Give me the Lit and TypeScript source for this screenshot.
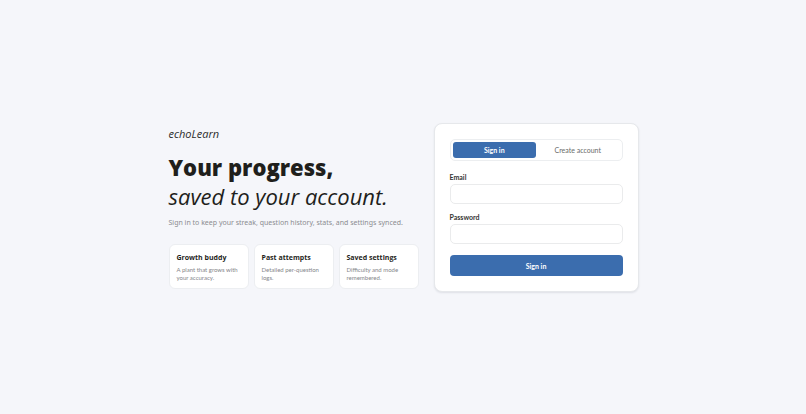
import { LitElement, html, css } from "lit";
import { customElement, state } from "lit/decorators.js";

const features = [
  { title: "Growth buddy", text: "A plant that grows with your accuracy." },
  { title: "Past attempts", text: "Detailed per-question logs." },
  { title: "Saved settings", text: "Difficulty and mode remembered." },
];

@customElement("app-root")
export class AppRoot extends LitElement {
  @state() mode = "signin";

  static styles = css`
    :host {
      display: grid;
      place-items: center;
      min-height: 100vh;
      box-sizing: border-box;
      padding: 17px 16px 16px 17px;
      background: #f5f6fa;
      color: #1f1f1c;
      font-family: "Open Sans", "Noto Sans", sans-serif;
    }
    * { box-sizing: border-box; }
    h1, h2, p { margin: 0; }
    button, input { font: inherit; }
    .layout {
      width: 100%;
      max-width: 470px;
      display: grid;
      grid-template-columns: minmax(0, 250fr) minmax(0, 205fr);
      gap: 15px;
      align-items: center;
    }
    .brand { font-size: 11px; line-height: 16px; font-style: italic; color: #2b2c2b; }
    h1 {
      margin-top: 11px;
      font-size: 22px;
      line-height: 29px;
      font-weight: 800;
      white-space: nowrap;
    }
    h1 em { display: block; font-weight: 400; }
    .lead {
      margin-top: 6px;
      font-family: "Noto Sans", sans-serif;
      font-size: 7px;
      line-height: 12px;
      color: #8b8c90;
      white-space: nowrap;
    }
    .features {
      margin-top: 15px;
      display: grid;
      grid-template-columns: repeat(3, minmax(0, 1fr));
      gap: 5px;
    }
    .feature {
      padding: 7px 7px 6px;
      background: #fff;
      border: 1px solid #eceef1;
      border-radius: 6px;
    }
    h2 { font-size: 7px; line-height: 12px; font-weight: 700; white-space: nowrap; }
    .feature p {
      margin-top: 2px;
      font-family: Lato, sans-serif;
      font-size: 6px;
      line-height: 8px;
      color: #85868a;
    }
    .card {
      padding: 15px;
      background: #fff;
      border: 1px solid #e6e8eb;
      border-radius: 8px;
      box-shadow: 0 1px 2px rgba(30, 40, 60, 0.1);
      font-family: Lato, sans-serif;
    }
    .tabs {
      display: grid;
      grid-template-columns: 1fr 1fr;
      padding: 2px;
      border: 1px solid #eceef0;
      border-radius: 5px;
    }
    .tab {
      height: 16px;
      padding: 0;
      border: 0;
      border-radius: 3px;
      background: none;
      color: #6a6b6a;
      font-size: 7px;
    }
    .tab.active { background: #3b6dae; color: #fff; font-weight: 700; }
    label { display: block; margin-top: 11px; font-size: 7px; line-height: 10px; font-weight: 700; color: #333432; }
    label + input { margin-top: 2px; }
    input {
      display: block;
      width: 100%;
      height: 20px;
      padding: 0 6px;
      border: 1px solid #eaebec;
      border-radius: 5px;
      background: #fff;
      font-size: 7px;
    }
    input + label { margin-top: 8px; }
    .submit {
      display: block;
      width: 100%;
      height: 21px;
      margin-top: 11px;
      padding: 0;
      border: 0;
      border-radius: 4px;
      background: #3b6dae;
      color: #fff;
      font-size: 7px;
      font-weight: 700;
    }
    @media (max-width: 480px) {
      .layout { grid-template-columns: minmax(0, 1fr); }
    }
  `;

  private tab(id: string, text: string) {
    return html`<button
      type="button"
      class="tab ${this.mode === id ? "active" : ""}"
      aria-pressed=${this.mode === id}
      @click=${() => (this.mode = id)}
    >${text}</button>`;
  }

  render() {
    return html`
      <main class="layout">
        <section>
          <p class="brand">echoLearn</p>
          <h1>Your progress, <em>saved to your account.</em></h1>
          <p class="lead">Sign in to keep your streak, question history, stats, and settings synced.</p>
          <div class="features">
            ${features.map((f) => html`<article class="feature"><h2>${f.title}</h2><p>${f.text}</p></article>`)}
          </div>
        </section>
        <form class="card" @submit=${(e: Event) => e.preventDefault()}>
          <div class="tabs">${this.tab("signin", "Sign in")}${this.tab("create", "Create account")}</div>
          <label for="email">Email</label>
          <input id="email" type="email" autocomplete="email" />
          <label for="password">Password</label>
          <input id="password" type="password" autocomplete="current-password" />
          <button class="submit" type="submit">${this.mode === "signin" ? "Sign in" : "Create account"}</button>
        </form>
      </main>
    `;
  }
}
